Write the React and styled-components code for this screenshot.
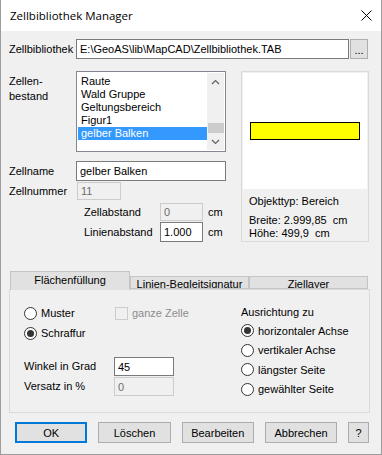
import React, { useState } from 'react';
import styled, { createGlobalStyle } from 'styled-components';

const GlobalStyle = createGlobalStyle`
  html, body {
    margin: 0;
    padding: 0;
    background: #ffffff;
  }
  body {
    font-family: "Liberation Sans", Arial, sans-serif;
    font-size: 11px;
    color: #000;
  }
`;

const Window = styled.div`
  width: 382px;
  height: 455px;
  box-sizing: border-box;
  border: 1px solid #9c9c9c;
  border-top: none;
  background: #f0f0f0;
  display: flex;
  flex-direction: column;
`;

const TitleBar = styled.div`
  height: 31px;
  flex: none;
  background: #ffffff;
  display: flex;
  align-items: center;
  justify-content: space-between;
  padding: 0 9px 0 9px;
`;

const Title = styled.span`
  font-family: "Open Sans", "Noto Sans", sans-serif;
  font-size: 11.5px;
  color: #000;
`;

const Body = styled.div`
  padding: 8px 12px 0 8px;
  display: flex;
  flex-direction: column;
`;

const Row = styled.div`
  display: flex;
  align-items: ${(p) => p.align || 'center'};
  margin-top: ${(p) => p.mt || 0}px;
  padding-left: ${(p) => p.indent || 0}px;
`;

const Label = styled.span`
  width: ${(p) => p.w || 67}px;
  flex: none;
  line-height: 15px;
  padding-top: ${(p) => p.pt || 0}px;
  color: ${(p) => (p.disabled ? '#8c8c8c' : '#000')};
`;

const TextBox = styled.div`
  box-sizing: border-box;
  width: ${(p) => p.w}px;
  height: ${(p) => p.h || 20}px;
  margin-left: ${(p) => p.ml || 0}px;
  border: 1px solid ${(p) => (p.disabled ? '#cccccc' : '#7a7a7a')};
  background: ${(p) => (p.disabled ? '#f0f0f0' : '#ffffff')};
  color: ${(p) => (p.disabled ? '#6d6d6d' : '#000')};
  padding-left: 3px;
  display: flex;
  align-items: center;
  white-space: nowrap;
  overflow: hidden;
`;

const SmallButton = styled.div`
  box-sizing: border-box;
  width: 18px;
  height: 20px;
  margin-left: 1px;
  background: #e1e1e1;
  border: 1px solid #adadad;
  display: flex;
  align-items: flex-end;
  justify-content: center;
  padding-bottom: 3px;
  line-height: 10px;
`;

const Middle = styled.div`
  display: flex;
  margin-top: 12px;
  gap: 15px;
`;

const LeftCol = styled.div`
  width: 217px;
  display: flex;
  flex-direction: column;
`;

const ListBox = styled.div`
  box-sizing: border-box;
  width: 150px;
  height: 81px;
  border: 1px solid #828790;
  background: #fff;
  display: flex;
  padding: 1px;
`;

const ListItems = styled.div`
  flex: 1;
  padding-top: 2px;
`;

const ListItem = styled.div`
  height: 13px;
  line-height: 13px;
  padding-left: 3px;
  background: ${(p) => (p.selected ? '#3399ff' : 'transparent')};
  color: ${(p) => (p.selected ? '#fff' : '#000')};
  white-space: nowrap;
`;

const ScrollBar = styled.div`
  width: 17px;
  background: #f0f0f0;
  display: flex;
  flex-direction: column;
  align-items: center;
`;

const ScrollArrow = styled.div`
  height: 17px;
  width: 17px;
  display: flex;
  align-items: center;
  justify-content: center;
`;

const ScrollTrack = styled.div`
  flex: 1;
  width: 17px;
  display: flex;
  flex-direction: column;
  justify-content: flex-end;
`;

const Thumb = styled.div`
  height: 10px;
  width: 16px;
  margin-left: 1px;
  background: #cdcdcd;
`;

const Unit = styled.span`
  margin-left: 5px;
`;

const Preview = styled.div`
  box-sizing: border-box;
  width: 128px;
  height: 171px;
  border: 1px solid #dadada;
  padding: 1px;
  display: flex;
  flex-direction: column;
`;

const Canvas = styled.div`
  height: 116px;
  background: #fff;
  display: flex;
  align-items: center;
  justify-content: center;
`;

const YellowBar = styled.div`
  box-sizing: border-box;
  width: 110px;
  height: 18px;
  background: #ffff00;
  border: 1px solid #000;
`;

const InfoLine = styled.div`
  padding-left: 6px;
  line-height: 13px;
  margin-top: ${(p) => p.mt || 0}px;
  white-space: pre;
`;

const TabStrip = styled.div`
  display: flex;
  align-items: flex-end;
  margin-top: 29px;
  padding-left: 1px;
`;

const Tab = styled.div`
  box-sizing: border-box;
  width: ${(p) => p.w}px;
  height: ${(p) => (p.active ? 19 : 13)}px;
  background: #e1e1e1;
  border: 1px solid #c4c4c4;
  border-bottom: ${(p) => (p.active ? 'none' : '1px solid #c4c4c4')};
  margin-bottom: ${(p) => (p.active ? -1 : 0)}px;
  position: relative;
  z-index: ${(p) => (p.active ? 1 : 0)};
  text-align: center;
  line-height: ${(p) => (p.active ? 16 : 15)}px;
  overflow: hidden;
  white-space: nowrap;
`;

const TabPanel = styled.div`
  box-sizing: border-box;
  width: 361px;
  height: 124px;
  border: 1px solid #dadada;
  display: flex;
  padding: 13px 0 0 14px;
`;

const PanelCol = styled.div`
  width: ${(p) => p.w}px;
  display: flex;
  flex-direction: column;
`;

const OptionRow = styled.div`
  display: flex;
  align-items: center;
  height: ${(p) => p.h || 20}px;
`;

const OptionText = styled.span`
  width: ${(p) => (p.w ? `${p.w}px` : 'auto')};
  color: ${(p) => (p.disabled ? '#8c8c8c' : '#000')};
`;

const RadioCircle = styled.span`
  box-sizing: border-box;
  width: 13px;
  height: 13px;
  border-radius: 50%;
  border: 1px solid #333333;
  background: #fff;
  margin-right: 4px;
  display: flex;
  align-items: center;
  justify-content: center;
  &::after {
    content: '';
    width: 7px;
    height: 7px;
    border-radius: 50%;
    background: ${(p) => (p.checked ? '#333333' : 'transparent')};
  }
`;

const CheckBox = styled.span`
  box-sizing: border-box;
  width: 13px;
  height: 13px;
  border: 1px solid #cccccc;
  background: #f0f0f0;
  margin-right: 4px;
`;

const ButtonBar = styled.div`
  display: flex;
  margin-top: 9px;
  padding-left: 6px;
  gap: 11px;
`;

const Button = styled.div`
  box-sizing: border-box;
  width: ${(p) => p.w || 73}px;
  height: 21px;
  background: #e1e1e1;
  border: ${(p) => (p.primary ? '2px solid #0078d7' : '1px solid #adadad')};
  display: flex;
  align-items: center;
  justify-content: center;
`;

const items = ['Raute', 'Wald Gruppe', 'Geltungsbereich', 'Figur1', 'gelber Balken'];

function Chevron({ up }) {
  return (
    <svg width="9" height="6" viewBox="0 0 9 6">
      <polyline
        points={up ? '1,5 4.5,1.5 8,5' : '1,1 4.5,4.5 8,1'}
        fill="none"
        stroke="#606060"
        strokeWidth="1.2"
      />
    </svg>
  );
}

function CloseIcon() {
  return (
    <svg width="11" height="11" viewBox="0 0 11 11">
      <path d="M0.5 0.5 L10.5 10.5 M10.5 0.5 L0.5 10.5" stroke="#000" strokeWidth="1" />
    </svg>
  );
}

export default function App() {
  const [selected, setSelected] = useState(4);
  const [fill, setFill] = useState('schraffur');
  const [align, setAlign] = useState(0);

  const alignOptions = ['horizontaler Achse', 'vertikaler Achse', 'längster Seite', 'gewählter Seite'];

  return (
    <>
      <GlobalStyle />
      <Window>
        <TitleBar>
          <Title>Zellbibliothek Manager</Title>
          <CloseIcon />
        </TitleBar>
        <Body>
          <Row>
            <Label>Zellbibliothek</Label>
            <TextBox w={273}>E:\GeoAS\lib\MapCAD\Zellbibliothek.TAB</TextBox>
            <SmallButton>...</SmallButton>
          </Row>

          <Middle>
            <LeftCol>
              <Row align="flex-start">
                <Label pt={3}>Zellen-<br />bestand</Label>
                <ListBox>
                  <ListItems>
                    {items.map((it, i) => (
                      <ListItem key={it} selected={i === selected} onClick={() => setSelected(i)}>
                        {it}
                      </ListItem>
                    ))}
                  </ListItems>
                  <ScrollBar>
                    <ScrollArrow><Chevron up /></ScrollArrow>
                    <ScrollTrack><Thumb /></ScrollTrack>
                    <ScrollArrow><Chevron /></ScrollArrow>
                  </ScrollBar>
                </ListBox>
              </Row>
              <Row mt={9}>
                <Label>Zellname</Label>
                <TextBox w={150}>{items[selected]}</TextBox>
              </Row>
              <Row mt={1}>
                <Label>Zellnummer</Label>
                <TextBox w={44} h={18} ml={1} disabled>11</TextBox>
              </Row>
              <Row mt={3} indent={75}>
                <Label w={76}>Zellabstand</Label>
                <TextBox w={43} h={18} disabled>0</TextBox>
                <Unit>cm</Unit>
              </Row>
              <Row mt={1} indent={75}>
                <Label w={76}>Linienabstand</Label>
                <TextBox w={43} h={20}>1.000</TextBox>
                <Unit>cm</Unit>
              </Row>
            </LeftCol>

            <Preview>
              <Canvas>
                <YellowBar />
              </Canvas>
              <InfoLine mt={6}>Objekttyp: Bereich</InfoLine>
              <InfoLine mt={6}>Breite: 2.999,85  cm</InfoLine>
              <InfoLine>Höhe: 499,9  cm</InfoLine>
            </Preview>
          </Middle>

          <TabStrip>
            <Tab w={120} active>Flächenfüllung</Tab>
            <Tab w={119}>Linien-Begleitsignatur</Tab>
            <Tab w={119}>Ziellayer</Tab>
          </TabStrip>
          <TabPanel>
            <PanelCol w={217}>
              <OptionRow onClick={() => setFill('muster')}>
                <RadioCircle checked={fill === 'muster'} />
                <OptionText w={74}>Muster</OptionText>
                <CheckBox />
                <OptionText disabled>ganze Zelle</OptionText>
              </OptionRow>
              <OptionRow onClick={() => setFill('schraffur')}>
                <RadioCircle checked={fill === 'schraffur'} />
                <OptionText>Schraffur</OptionText>
              </OptionRow>
              <Row mt={14}>
                <Label w={90}>Winkel in Grad</Label>
                <TextBox w={60} h={19}>45</TextBox>
              </Row>
              <Row mt={1}>
                <Label w={90}>Versatz in %</Label>
                <TextBox w={60} h={19} disabled>0</TextBox>
              </Row>
            </PanelCol>
            <PanelCol w={120}>
              <OptionRow h={18}>Ausrichtung zu</OptionRow>
              {alignOptions.map((o, i) => (
                <OptionRow key={o} h={19.5} onClick={() => setAlign(i)}>
                  <RadioCircle checked={align === i} />
                  <OptionText>{o}</OptionText>
                </OptionRow>
              ))}
            </PanelCol>
          </TabPanel>

          <ButtonBar>
            <Button primary>OK</Button>
            <Button>Löschen</Button>
            <Button>Bearbeiten</Button>
            <Button>Abbrechen</Button>
            <Button w={21}>?</Button>
          </ButtonBar>
        </Body>
      </Window>
    </>
  );
}
